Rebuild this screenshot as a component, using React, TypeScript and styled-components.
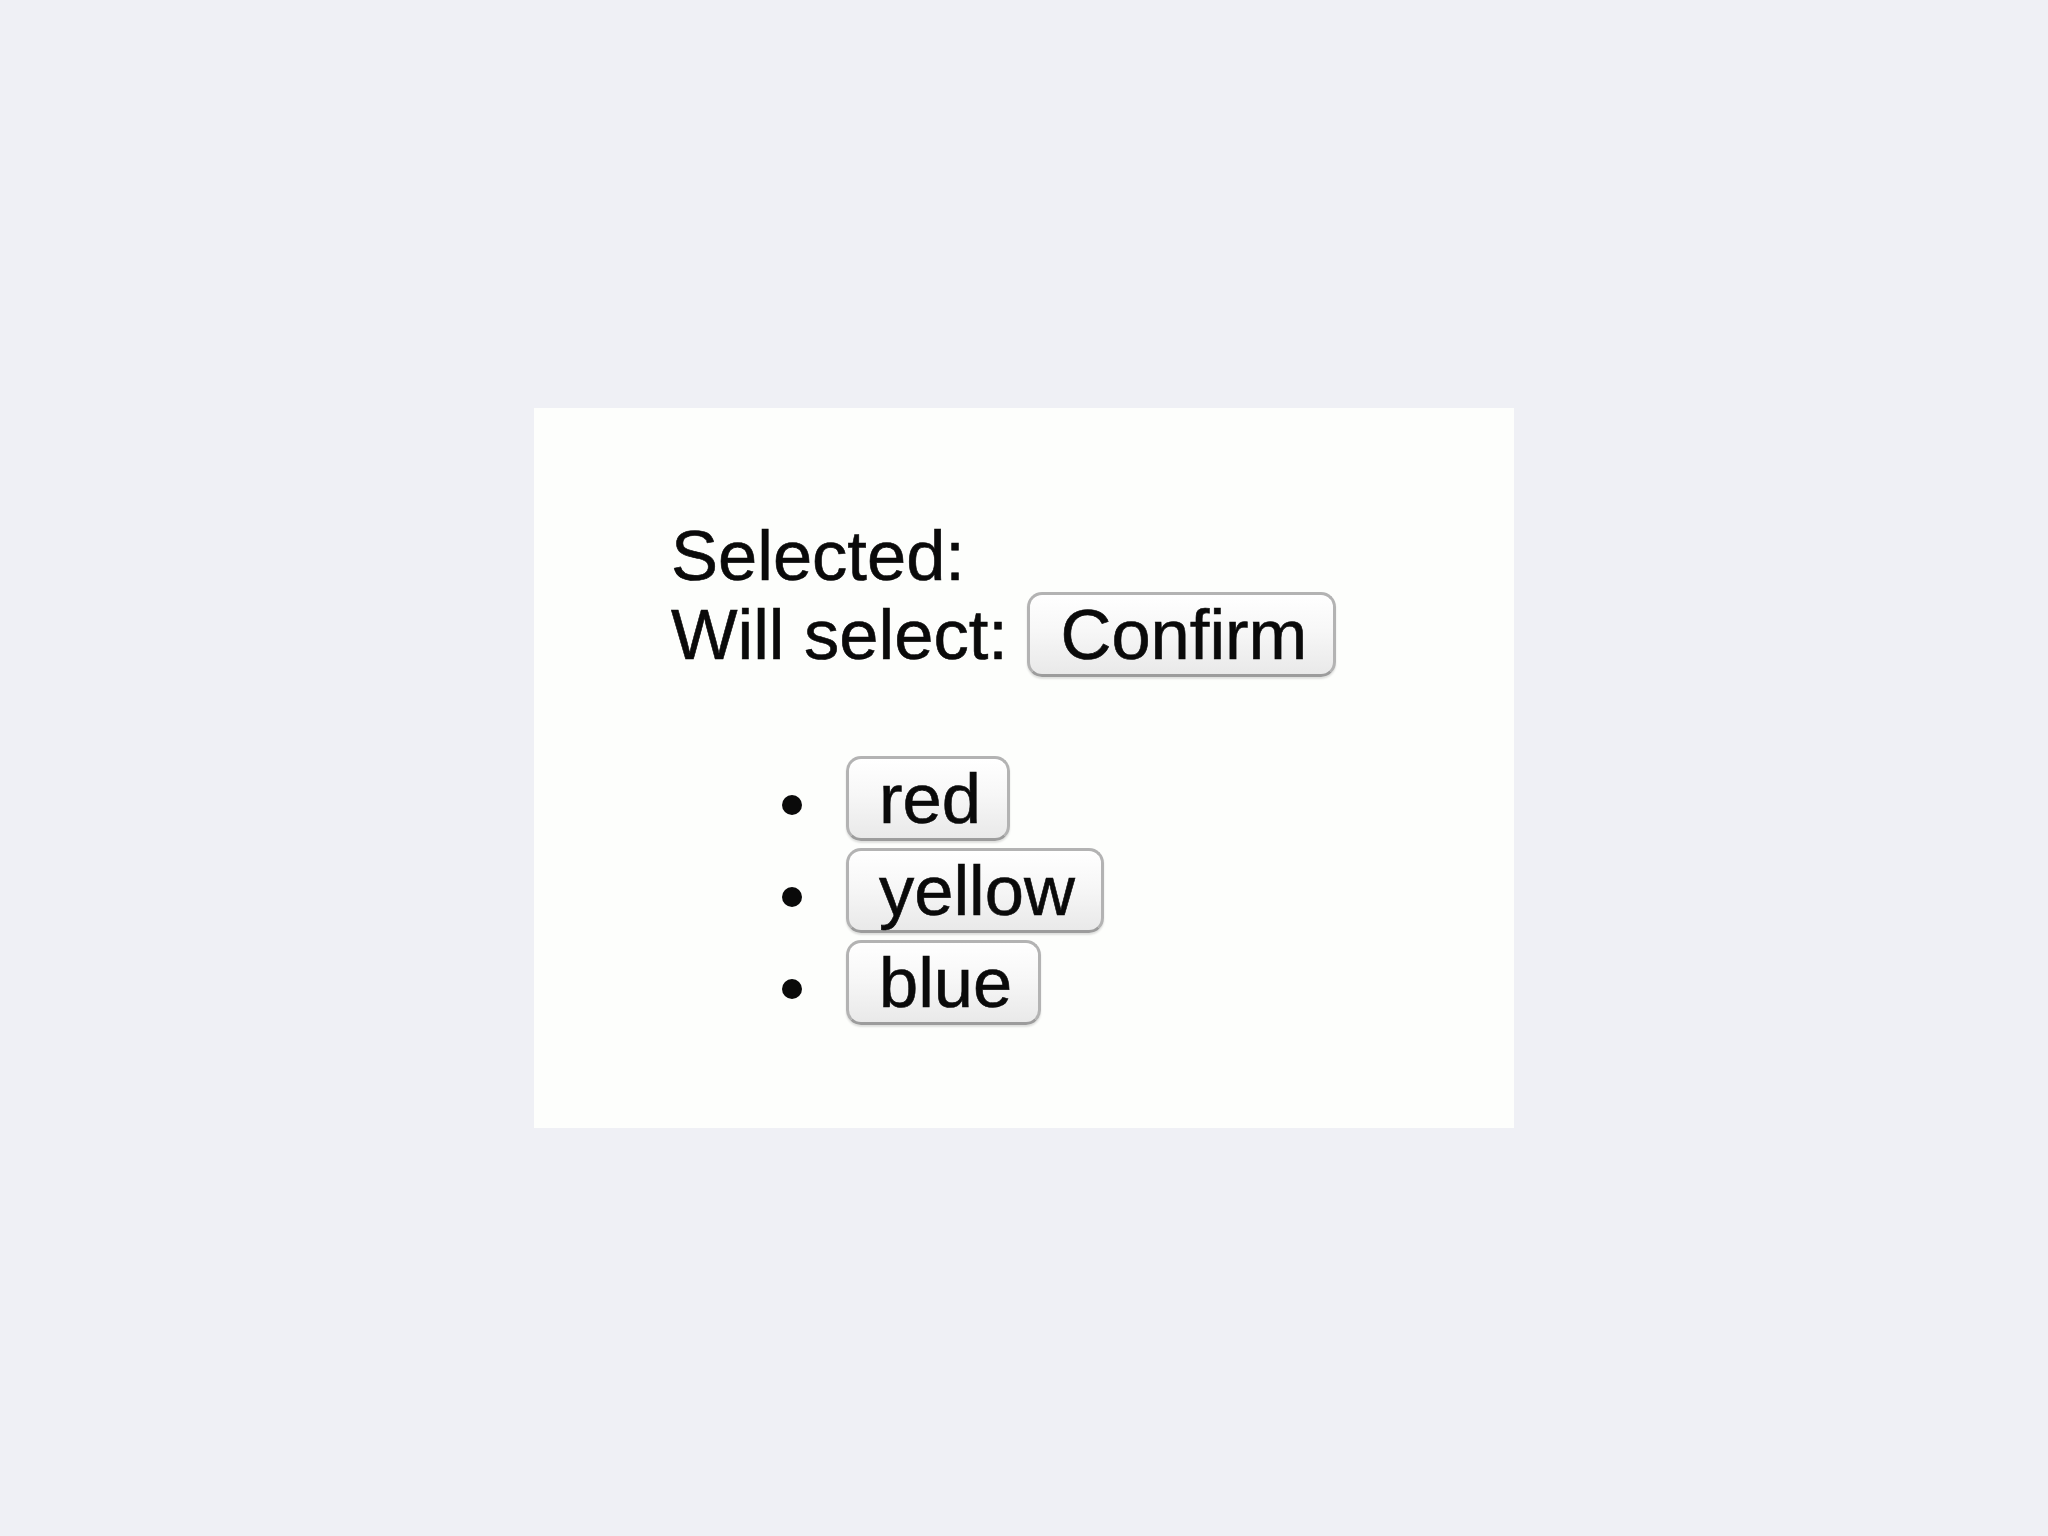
import React from 'react';
import styled, { createGlobalStyle } from 'styled-components';

const GlobalStyle = createGlobalStyle`
  html, body {
    margin: 0;
    padding: 0;
    background: #eff0f5;
  }
  body {
    font-family: 'Liberation Sans', Arial, Helvetica, sans-serif;
    color: #0a0a0a;
  }
`;

const Page = styled.div`
  width: 2048px;
  height: 1536px;
  display: flex;
  align-items: center;
  justify-content: center;
`;

const Panel = styled.div`
  box-sizing: border-box;
  width: 980px;
  height: 720px;
  background: #fdfefc;
  padding: 111px 0 0 137px;
  font-size: 70.5px;
  line-height: 73px;
  -webkit-text-stroke: 0.6px #0a0a0a;
`;

const Line = styled.div`
  white-space: nowrap;
`;

const Button = styled.button`
  box-sizing: border-box;
  display: inline-block;
  height: 85px;
  margin: 0;
  padding: 0 26px 0 30px;
  border: 3px solid #b3b3b3;
  border-bottom-color: #9c9c9c;
  border-radius: 15px;
  background: linear-gradient(#ffffff 0%, #f7f7f7 45%, #e9e9e9 100%);
  box-shadow: 0 2px 2px rgba(0, 0, 0, 0.12);
  font-family: inherit;
  font-size: 70.5px;
  line-height: 77px;
  color: #0a0a0a;
  -webkit-text-stroke: 0.6px #0a0a0a;
  vertical-align: baseline;
  cursor: pointer;
`;

const ColorList = styled.ul`
  list-style: none;
  margin: 79px 0 0 0;
  padding: 0 0 0 111px;
`;

const ColorItem = styled.li`
  display: flex;
  align-items: center;
  gap: 44px;
  margin-bottom: 7px;
`;

const Bullet = styled.span`
  width: 20px;
  height: 20px;
  border-radius: 50%;
  background: #0a0a0a;
  margin-top: 12px;
  flex-shrink: 0;
`;

const colors = ['red', 'yellow', 'blue'];

const App: React.FC = () => {
  return (
    <Page>
      <GlobalStyle />
      <Panel>
        <Line>Selected:</Line>
        <Line>
          Will select: <Button>Confirm</Button>
        </Line>
        <ColorList>
          {colors.map((c) => (
            <ColorItem key={c}>
              <Bullet />
              <Button>{c}</Button>
            </ColorItem>
          ))}
        </ColorList>
      </Panel>
    </Page>
  );
};

export default App;
